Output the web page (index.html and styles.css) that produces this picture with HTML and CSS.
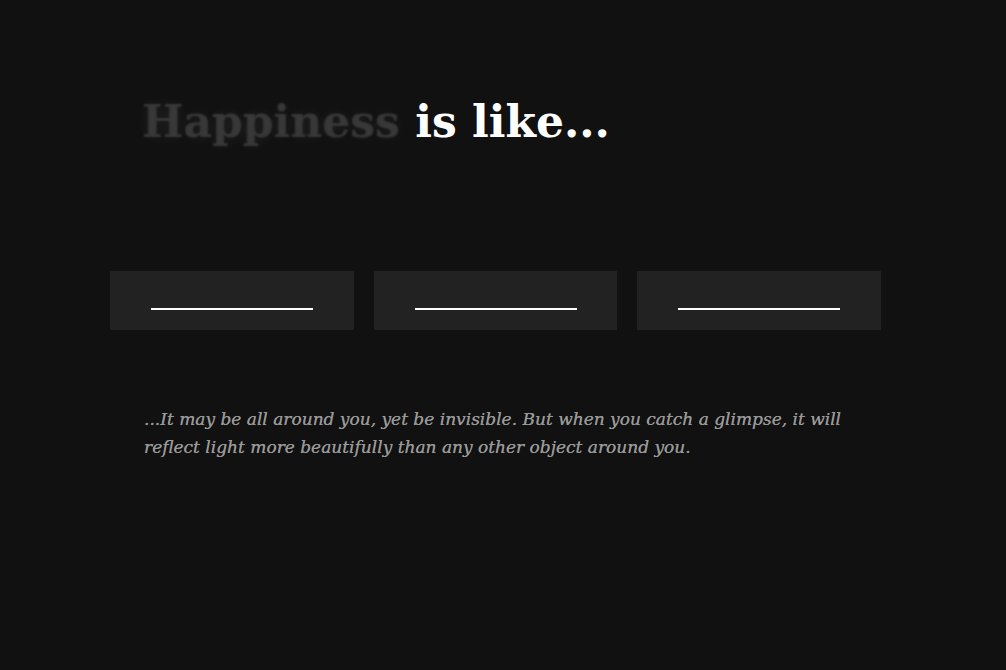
FILE: index.html
```html
<!DOCTYPE html>
<html>
<head>
<meta charset="utf-8">
<link rel="stylesheet" href="styles.css">
</head>
<body>
<main class="page">
  <h1 class="title"><span class="ghost">Happiness</span> is like...</h1>
  <div class="blanks">
    <div class="blank"><span class="line"></span></div>
    <div class="blank"><span class="line"></span></div>
    <div class="blank"><span class="line"></span></div>
  </div>
  <p class="quote">...It may be all around you, yet be invisible. But when you catch a glimpse, it will reflect light more beautifully than any other object around you.</p>
</main>
</body>
</html>
```
FILE: styles.css
```css
html, body {
  margin: 0;
  padding: 0;
  background: #111111;
  height: 100%;
}
.page {
  padding: 0 125px 0 110px;
  font-family: "DejaVu Serif", "Liberation Serif", serif;
}
.title {
  margin: 0;
  padding: 94px 0 0 32px;
  height: 271px;
  box-sizing: border-box;
  font-size: 44px;
  line-height: 56px;
  font-weight: bold;
  color: #ffffff;
}
.ghost {
  color: transparent;
  text-shadow: 0 0 2px rgba(60,60,60,0.9), 0 0 14px rgba(255,255,255,0.06), 0 0 26px rgba(255,255,255,0.05);
}
.blanks {
  display: flex;
  gap: 20px;
}
.blank {
  flex: 1;
  height: 59px;
  background: #222222;
  display: flex;
  justify-content: center;
  padding-top: 37px;
  box-sizing: border-box;
}
.line {
  display: block;
  width: 162px;
  height: 2px;
  background: #ffffff;
}
.quote {
  margin: 75px 0 0 34px;
  font-style: italic;
  font-size: 17px;
  line-height: 28px;
  color: #999999;
  text-shadow: 0 0 0.4px #999999;
}
```
